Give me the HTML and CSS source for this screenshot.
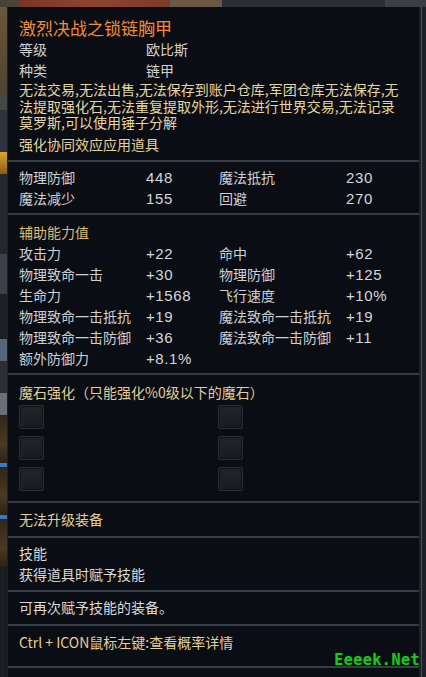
FILE: index.html
```html
<!DOCTYPE html>
<html lang="zh-CN">
<head>
<meta charset="utf-8">
<title>激烈决战之锁链胸甲</title>
<link rel="stylesheet" href="styles.css">
</head>
<body>
<div class="screen">
  <div class="corner"></div>
  <div class="topbar">
    <span class="tb tb1"></span><span class="tb tb2"></span><span class="tb tb3"></span><span class="tb tb4"></span><span class="tb tb5"></span>
  </div>
  <div class="corner corner-r"></div>

  <div class="leftstrip">
    <span class="ls ls1"></span><span class="ls ls2"></span><span class="ls ls3"></span><span class="ls ls4"></span><span class="ls ls5"></span><span class="ls ls6"></span><span class="ls ls7"></span><span class="ls ls8"></span><span class="ls ls9"></span><span class="ls ls10"></span><span class="ls ls11"></span><span class="ls ls12"></span><span class="ls ls11"></span><span class="ls ls12"></span><span class="ls ls11"></span>
  </div>

  <div class="panel">
    <section class="sec sec-head">
      <div class="title">激烈决战之锁链胸甲</div>
      <div class="kv"><span class="k">等级</span><span class="v">欧比斯</span></div>
      <div class="kv"><span class="k">种类</span><span class="v">链甲</span></div>
      <p class="desc">无法交易,无法出售,无法保存到账户仓库,军团仓库无法保存,无<br>法提取强化石,无法重复提取外形,无法进行世界交易,无法记录<br>莫罗斯,可以使用锤子分解</p>
      <div class="note">强化协同效应应用道具</div>
    </section>

    <section class="sec sec-base">
      <div class="stats">
        <span class="lbl">物理防御</span><span class="num">448</span><span class="lbl">魔法抵抗</span><span class="num">230</span>
        <span class="lbl">魔法减少</span><span class="num">155</span><span class="lbl">回避</span><span class="num">270</span>
      </div>
    </section>

    <section class="sec sec-sub">
      <div class="subhead">辅助能力值</div>
      <div class="stats">
        <span class="lbl">攻击力</span><span class="num">+22</span><span class="lbl">命中</span><span class="num">+62</span>
        <span class="lbl">物理致命一击</span><span class="num">+30</span><span class="lbl">物理防御</span><span class="num">+125</span>
        <span class="lbl">生命力</span><span class="num">+1568</span><span class="lbl">飞行速度</span><span class="num">+10%</span>
        <span class="lbl">物理致命一击抵抗</span><span class="num">+19</span><span class="lbl">魔法致命一击抵抗</span><span class="num">+19</span>
        <span class="lbl">物理致命一击防御</span><span class="num">+36</span><span class="lbl">魔法致命一击防御</span><span class="num">+11</span>
        <span class="lbl">额外防御力</span><span class="num">+8.1%</span>
      </div>
    </section>

    <section class="sec sec-stone">
      <div class="gold">魔石强化（只能强化%0级以下的魔石）</div>
      <div class="slots">
        <span class="slot"></span><span class="slot"></span>
        <span class="slot"></span><span class="slot"></span>
        <span class="slot"></span><span class="slot"></span>
      </div>
    </section>

    <section class="sec sec-up">
      <div class="gold">无法升级装备</div>
    </section>

    <section class="sec sec-skill">
      <div class="white">技能</div>
      <div class="white">获得道具时赋予技能</div>
    </section>

    <section class="sec sec-again">
      <div class="white">可再次赋予技能的装备。</div>
    </section>

    <section class="sec sec-ctrl">
      <div class="gold">Ctrl + ICON鼠标左键:查看概率详情</div>
    </section>

    <section class="sec sec-rest"></section>
  </div>

  <div class="rightstrip"><span class="rline"></span></div>

  <div class="watermark">Eeeek.Net</div>
</div>
</body>
</html>
```

FILE: styles.css
```css
* { box-sizing: border-box; }

html, body {
  margin: 0;
  padding: 0;
  background: #1a1d22;
}

.screen {
  position: relative;
  width: 426px;
  height: 677px;
  overflow: hidden;
  display: grid;
  grid-template-columns: 7px 412px 7px;
  grid-template-rows: 7px 670px;
  background: #1a1d22;
}

.corner { background: #45413a; }
.corner-r { background: #3a3f46; }

.topbar {
  display: flex;
  height: 7px;
}
.tb { display: block; height: 7px; }
.tb1 { width: 13px; background: #4a443a; }
.tb2 { width: 150px; background: linear-gradient(90deg, #7a3526, #8d4530 50%, #7a3a2a); }
.tb3 { width: 52px; background: #6a5a45; }
.tb4 { width: 163px; background: #2b2f35; }
.tb5 { flex: 1; background: #3b4047; }

.leftstrip {
  display: flex;
  flex-direction: column;
  overflow: hidden;
}
.ls { display: block; width: 7px; }
.ls1 { height: 88px; background: linear-gradient(#6a583a, #4d4232); }
.ls2 { height: 15px; background: #474747; }
.ls3 { height: 42px; background: #2d343e; }
.ls4 { height: 22px; background: linear-gradient(#d8a830, #8a5a15); }
.ls5 { height: 80px; background: #23282f; }
.ls6 { height: 40px; background: #3c4149; }
.ls7 { height: 45px; background: #1c2027; }
.ls8 { height: 22px; background: #56657a; }
.ls9 { height: 32px; background: #2a2f36; }
.ls10 { height: 22px; background: #6a7078; }
.ls11 { height: 48px; background: linear-gradient(#2e2618, #4a3a22 60%, #2a2216); }
.ls12 { height: 4px; background: #3a78c8; }

.rightstrip {
  background: #1d2127;
  display: flex;
  justify-content: flex-start;
}
.rline {
  display: block;
  width: 1px;
  margin-left: 2px;
  background: #4a5058;
}

.panel {
  background: #0a0d13;
  border-left: 1px solid #1c2129;
  display: flex;
  flex-direction: column;
  font-family: "Noto Sans CJK SC", "Noto Sans", sans-serif;
  font-size: 14px;
  line-height: 21px;
  color: #cfd3d8;
  overflow: hidden;
}

.sec {
  padding: 0 15px 0 11px;
  border-top: 2px solid #373d46;
}
.sec-head {
  border-top: 0;
  padding-top: 10px;
  padding-bottom: 5.5px;
}
.title {
  font-size: 17px;
  line-height: 22px;
  color: #ef8c3c;
}
.kv {
  display: grid;
  grid-template-columns: 127px auto;
  color: #d2d2d2;
}
.desc {
  margin: 0;
  line-height: 16.5px;
  color: #e4d6a6;
}
.note {
  margin-top: 3px;
  color: #e2d1a0;
}

.stats {
  display: grid;
  grid-template-columns: 127px 73px 127px auto;
}
.num {
  font-family: "Liberation Sans", "DejaVu Sans", sans-serif;
  font-size: 15px;
  letter-spacing: 0.6px;
  color: #d4d8dc;
}
.lbl { color: #cdd1d6; }

.sec-base { padding-top: 4.5px; padding-bottom: 4.5px; }
.sec-sub { padding-top: 6.5px; padding-bottom: 4.5px; }
.subhead { color: #dcbc78; }

.sec-stone { padding-top: 7px; padding-bottom: 10px; }
.gold { color: #e2cf9c; }
.white { color: #dadada; }

.slots {
  margin-top: 2px;
  display: grid;
  grid-template-columns: 199px 25px;
  grid-auto-rows: 24px;
  row-gap: 7px;
}
.slot {
  display: block;
  width: 25px;
  height: 24px;
  border: 1px solid #2c3035;
  border-radius: 2px;
  background: linear-gradient(#23262b, #16191d);
  box-shadow: inset 0 0 0 1px #101215, inset 1px 1px 0 2px #1f2227;
}

.sec-up { padding-top: 5.5px; padding-bottom: 6.5px; }
.sec-skill { padding-top: 4.5px; padding-bottom: 5.5px; }
.sec-again { padding-top: 4.5px; padding-bottom: 6.5px; }
.sec-ctrl { padding-top: 5.5px; padding-bottom: 13.5px; }
.sec-rest { flex: 1; }

.watermark {
  position: absolute;
  right: 6px;
  top: 651px;
  font-family: "DejaVu Sans Mono", monospace;
  font-weight: bold;
  font-size: 15px;
  letter-spacing: 0.5px;
  color: #22c222;
  text-shadow: 0 0 2px #0a5a0a;
}
```
